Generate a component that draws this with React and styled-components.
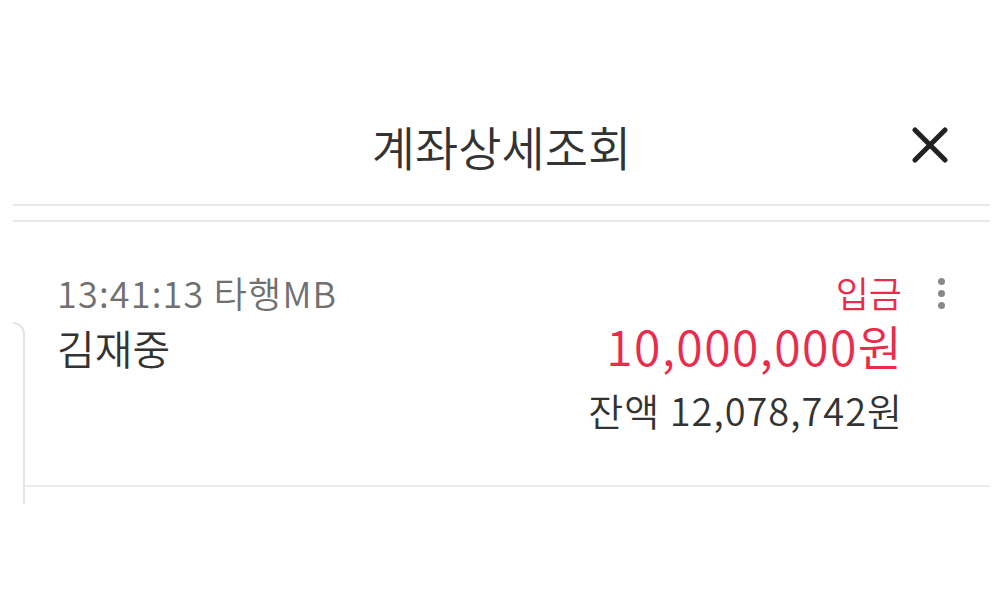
import React from "react"
import styled, { createGlobalStyle } from "styled-components"

const GlobalStyle = createGlobalStyle`
  html, body {
    margin: 0;
    padding: 0;
    background: #fff;
  }
  body {
    font-family: "Noto Sans CJK KR", "Noto Sans", sans-serif;
    color: #333;
  }
`

const Page = styled.div`
  width: 1000px;
  height: 590px;
  padding: 0 10px 0 13px;
  box-sizing: border-box;
  overflow: hidden;
`

const Header = styled.header`
  display: grid;
  grid-template-columns: 1fr auto 1fr;
  align-items: center;
  height: 204px;
  padding-top: 86px;
  box-sizing: border-box;
`

const Title = styled.h1`
  grid-column: 2;
  margin: 0;
  font-size: 47px;
  font-weight: 350;
  line-height: 1;
  color: #333;
`

const CloseButton = styled.button`
  justify-self: end;
  margin-right: 40px;
  width: 40px;
  height: 40px;
  padding: 0;
  border: 0;
  background: none;
  display: flex;
  align-items: center;
  justify-content: center;
`

const Divider = styled.div`
  height: 2px;
  background: #e9e9e9;
  margin-bottom: ${(p) => p.gap || 0}px;
`

const Row = styled.div`
  position: relative;
  margin-top: 48px;
  margin-left: 12px;
  padding: 0 88px 0 32px;
  height: 217px;
  box-sizing: border-box;
  display: flex;
  justify-content: space-between;
  border-bottom: 2px solid #ececec;

  &::before {
    content: "";
    position: absolute;
    left: -12px;
    top: 52px;
    width: 12px;
    height: 182px;
    border-top: 2px solid #e4e4e4;
    border-right: 2px solid #e4e4e4;
    border-top-right-radius: 14px;
    box-sizing: border-box;
  }
`

const Column = styled.div`
  display: flex;
  flex-direction: column;
  align-items: ${(p) => (p.right ? "flex-end" : "flex-start")};
`

const Meta = styled.div`
  font-size: 36px;
  font-weight: 350;
  line-height: 44px;
  color: #707070;
  letter-spacing: 1.2px;
`

const Name = styled.div`
  margin-top: 2px;
  font-size: 41px;
  font-weight: 350;
  line-height: 62px;
  color: #333;
`

const Kind = styled.div`
  font-size: 36px;
  font-weight: 350;
  line-height: 44px;
  color: #ec2a4b;
`

const Amount = styled.div`
  margin-top: 4px;
  font-size: 48px;
  font-weight: 350;
  line-height: 54px;
  color: #ec2a4b;
  letter-spacing: 1.5px;
  margin-right: -1.5px;
`

const Balance = styled.div`
  margin-top: 14px;
  font-size: 38px;
  font-weight: 350;
  line-height: 48px;
  color: #333;
  letter-spacing: 1px;
  margin-right: -1px;
`

const MoreButton = styled.div`
  position: absolute;
  right: 45px;
  top: 8px;
  display: flex;
  flex-direction: column;
  gap: 5px;

  span {
    width: 7px;
    height: 7px;
    border-radius: 50%;
    background: #8a8a8a;
  }
`

const App = () => {
  return (
    <Page>
      <GlobalStyle />
      <Header>
        <Title>계좌상세조회</Title>
        <CloseButton aria-label="닫기">
          <svg width="36" height="36" viewBox="0 0 36 36">
            <path
              d="M3 3 L33 33 M33 3 L3 33"
              stroke="#222"
              strokeWidth="5"
              strokeLinecap="round"
            />
          </svg>
        </CloseButton>
      </Header>
      <Divider gap={14} />
      <Divider />
      <Row>
        <Column>
          <Meta>13:41:13 타행MB</Meta>
          <Name>김재중</Name>
        </Column>
        <Column right>
          <Kind>입금</Kind>
          <Amount>10,000,000원</Amount>
          <Balance>잔액 12,078,742원</Balance>
        </Column>
        <MoreButton>
          <span />
          <span />
          <span />
        </MoreButton>
      </Row>
    </Page>
  )
}

export default App
